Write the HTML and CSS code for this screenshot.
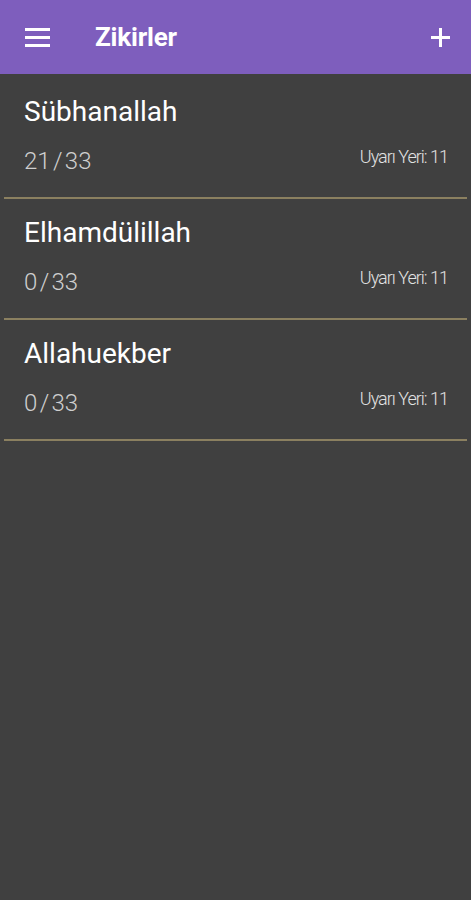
FILE: index.html
```html
<!DOCTYPE html>
<html lang="tr">
<head>
<meta charset="utf-8">
<title>Zikirler</title>
<link rel="stylesheet" href="styles.css">
</head>
<body>
<header class="appbar">
  <button class="icon-btn menu" aria-label="Menü">
    <svg width="25" height="19" viewBox="0 0 25 19"><rect x="0" y="0" width="25" height="3" fill="#fff"/><rect x="0" y="8" width="25" height="3" fill="#fff"/><rect x="0" y="16" width="25" height="3" fill="#fff"/></svg>
  </button>
  <h1 class="title">Zikirler</h1>
  <button class="icon-btn add" aria-label="Ekle">
    <svg width="19" height="19" viewBox="0 0 19 19"><rect x="8" y="0" width="3" height="19" fill="#fff"/><rect x="0" y="8" width="19" height="3" fill="#fff"/></svg>
  </button>
</header>
<main class="list">
  <div class="item">
    <div class="name">Sübhanallah</div>
    <div class="row">
      <span class="count">21 / 33</span>
      <span class="alert">Uyarı Yeri: 11</span>
    </div>
  </div>
  <div class="item">
    <div class="name">Elhamdülillah</div>
    <div class="row">
      <span class="count">0 / 33</span>
      <span class="alert">Uyarı Yeri: 11</span>
    </div>
  </div>
  <div class="item">
    <div class="name">Allahuekber</div>
    <div class="row">
      <span class="count">0 / 33</span>
      <span class="alert">Uyarı Yeri: 11</span>
    </div>
  </div>
</main>
</body>
</html>
```
FILE: styles.css
```css
html, body {
  margin: 0;
  padding: 0;
}
body {
  background: #404040;
  font-family: Roboto, "Liberation Sans", sans-serif;
  width: 471px;
  height: 900px;
  overflow: hidden;
}
.appbar {
  height: 74px;
  background: #7e5ebd;
  display: flex;
  align-items: center;
  padding: 0 21px 0 25px;
  box-sizing: border-box;
}
.icon-btn {
  background: none;
  border: 0;
  padding: 0;
  display: flex;
  cursor: pointer;
}
.menu {
  margin-top: 1px;
}
.title {
  margin: 0 0 0 45px;
  color: #fff;
  font-size: 26px;
  font-weight: 700;
  line-height: 30px;
  letter-spacing: -0.2px;
  flex: 1;
}
.add {
  margin-top: 1px;
}
.list {
  padding-top: 4px;
}
.item {
  margin: 0 4px;
  padding: 18px 19px 22px 20px;
  border-bottom: 2px solid #8b8060;
}
.name {
  color: #fff;
  font-size: 28px;
  line-height: 32px;
}
.row {
  margin-top: 19px;
  display: flex;
  justify-content: space-between;
  align-items: flex-start;
}
.count {
  color: #cfcfcf;
  font-size: 24px;
  font-weight: 300;
  line-height: 28px;
  word-spacing: -3.5px;
}
.alert {
  color: #e2e2e2;
  font-size: 18px;
  font-weight: 300;
  line-height: 20px;
  letter-spacing: -1px;
}
```
